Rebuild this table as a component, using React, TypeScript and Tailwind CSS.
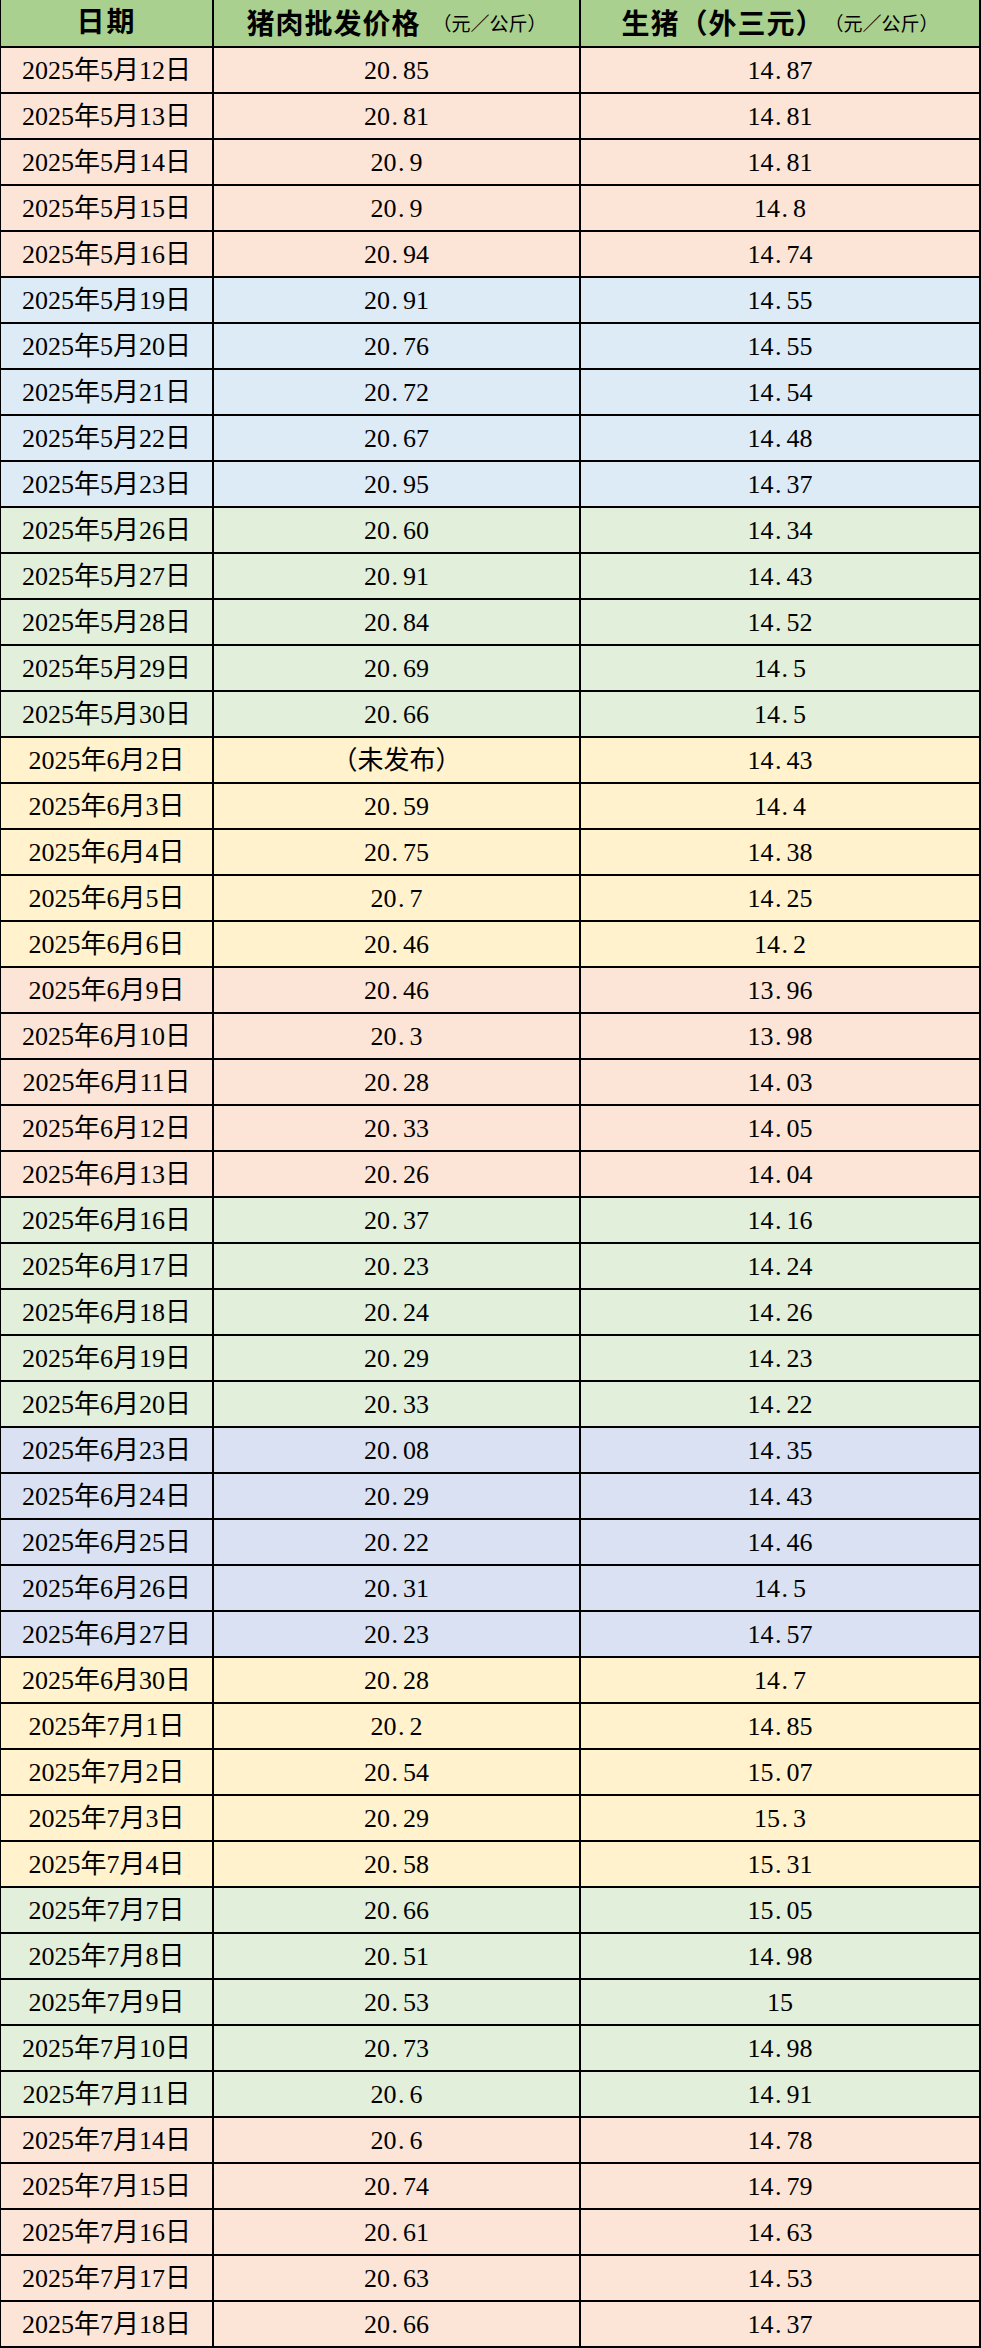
import React from 'react';

type Row = [string, string, string];

const groups: { color: string; rows: Row[] }[] = [
  {
    color: 'bg-[#fce4d6]',
    rows: [
      ['2025年5月12日', '20.85', '14.87'],
      ['2025年5月13日', '20.81', '14.81'],
      ['2025年5月14日', '20.9', '14.81'],
      ['2025年5月15日', '20.9', '14.8'],
      ['2025年5月16日', '20.94', '14.74'],
    ],
  },
  {
    color: 'bg-[#ddebf7]',
    rows: [
      ['2025年5月19日', '20.91', '14.55'],
      ['2025年5月20日', '20.76', '14.55'],
      ['2025年5月21日', '20.72', '14.54'],
      ['2025年5月22日', '20.67', '14.48'],
      ['2025年5月23日', '20.95', '14.37'],
    ],
  },
  {
    color: 'bg-[#e2efda]',
    rows: [
      ['2025年5月26日', '20.60', '14.34'],
      ['2025年5月27日', '20.91', '14.43'],
      ['2025年5月28日', '20.84', '14.52'],
      ['2025年5月29日', '20.69', '14.5'],
      ['2025年5月30日', '20.66', '14.5'],
    ],
  },
  {
    color: 'bg-[#fff2cc]',
    rows: [
      ['2025年6月2日', '（未发布）', '14.43'],
      ['2025年6月3日', '20.59', '14.4'],
      ['2025年6月4日', '20.75', '14.38'],
      ['2025年6月5日', '20.7', '14.25'],
      ['2025年6月6日', '20.46', '14.2'],
    ],
  },
  {
    color: 'bg-[#fce4d6]',
    rows: [
      ['2025年6月9日', '20.46', '13.96'],
      ['2025年6月10日', '20.3', '13.98'],
      ['2025年6月11日', '20.28', '14.03'],
      ['2025年6月12日', '20.33', '14.05'],
      ['2025年6月13日', '20.26', '14.04'],
    ],
  },
  {
    color: 'bg-[#e2efda]',
    rows: [
      ['2025年6月16日', '20.37', '14.16'],
      ['2025年6月17日', '20.23', '14.24'],
      ['2025年6月18日', '20.24', '14.26'],
      ['2025年6月19日', '20.29', '14.23'],
      ['2025年6月20日', '20.33', '14.22'],
    ],
  },
  {
    color: 'bg-[#d9e1f2]',
    rows: [
      ['2025年6月23日', '20.08', '14.35'],
      ['2025年6月24日', '20.29', '14.43'],
      ['2025年6月25日', '20.22', '14.46'],
      ['2025年6月26日', '20.31', '14.5'],
      ['2025年6月27日', '20.23', '14.57'],
    ],
  },
  {
    color: 'bg-[#fff2cc]',
    rows: [
      ['2025年6月30日', '20.28', '14.7'],
      ['2025年7月1日', '20.2', '14.85'],
      ['2025年7月2日', '20.54', '15.07'],
      ['2025年7月3日', '20.29', '15.3'],
      ['2025年7月4日', '20.58', '15.31'],
    ],
  },
  {
    color: 'bg-[#e2efda]',
    rows: [
      ['2025年7月7日', '20.66', '15.05'],
      ['2025年7月8日', '20.51', '14.98'],
      ['2025年7月9日', '20.53', '15'],
      ['2025年7月10日', '20.73', '14.98'],
      ['2025年7月11日', '20.6', '14.91'],
    ],
  },
  {
    color: 'bg-[#fce4d6]',
    rows: [
      ['2025年7月14日', '20.6', '14.78'],
      ['2025年7月15日', '20.74', '14.79'],
      ['2025年7月16日', '20.61', '14.63'],
      ['2025年7月17日', '20.63', '14.53'],
      ['2025年7月18日', '20.66', '14.37'],
    ],
  },
];

// 宋体里小数点占半角宽度，这里用定宽 span 模拟
const Num = ({ value }: { value: string }) => {
  if (!value.includes('.')) return <>{value}</>;
  const [a, b] = value.split('.');
  return (
    <>
      {a}
      <span className="inline-block w-[0.5em] pl-[0.06em]">.</span>
      {b}
    </>
  );
};

const cell = 'flex items-center justify-center border-r-2 border-black';

export default function App() {
  return (
    <div
      className="w-[981px] bg-white text-black"
      style={{ fontFamily: '"Liberation Serif", "Noto Sans CJK SC", serif' }}
    >
      <div className="border-l border-black">
        {/* 表头 */}
        <div className="grid h-[46px] grid-cols-[213px_367px_1fr] bg-[#a9d08e]">
          <div className={`${cell} text-[28px] font-bold tracking-[2px]`}>日期</div>
          <div className={`${cell} items-baseline pt-[4px]`}>
            <span className="text-[28px] font-bold tracking-[1px]">猪肉批发价格</span>
            <span className="ml-3 text-[19px]">（元／公斤）</span>
          </div>
          <div className={`${cell} items-baseline pt-[4px]`}>
            <span className="text-[28px] font-bold tracking-[1px]">生猪（外三元）</span>
            <span className="text-[19px]">（元／公斤）</span>
          </div>
        </div>

        {groups.map((g, gi) =>
          g.rows.map((r, ri) => (
            <div
              key={`${gi}-${ri}`}
              className={`grid h-[46px] grid-cols-[213px_367px_1fr] border-t-2 border-black text-[26px] ${g.color} ${
                gi === groups.length - 1 && ri === g.rows.length - 1 ? 'h-[48px] border-b-2' : ''
              }`}
            >
              <div className={cell}>{r[0]}</div>
              <div className={cell}>
                <Num value={r[1]} />
              </div>
              <div className={cell}>
                <Num value={r[2]} />
              </div>
            </div>
          ))
        )}
      </div>
    </div>
  );
}
